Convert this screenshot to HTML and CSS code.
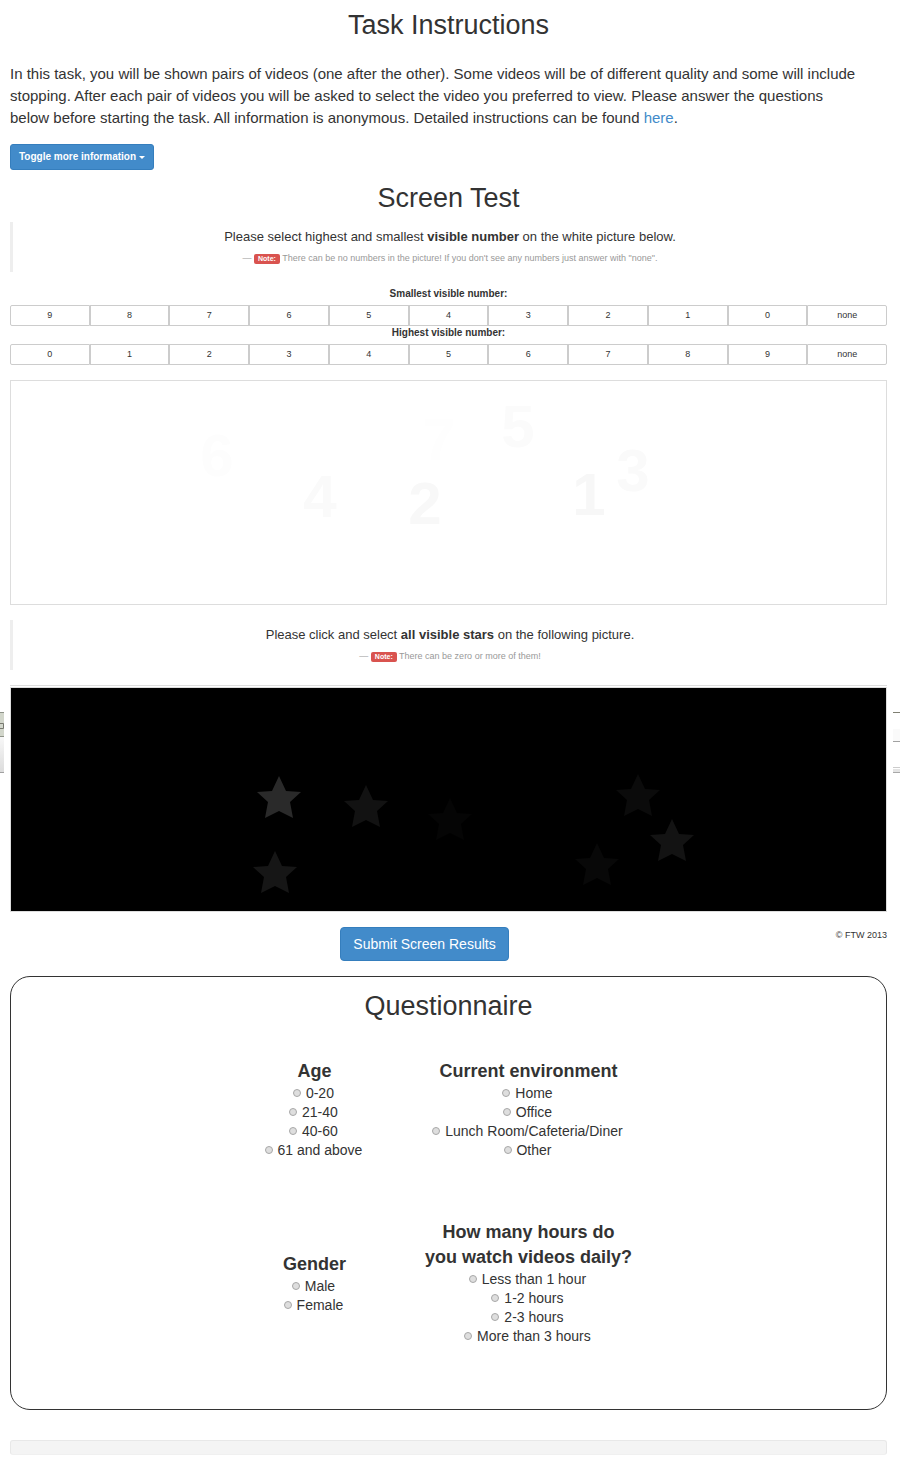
FILE: index.html
```html
<!DOCTYPE html>
<html lang="en">
<head>
<meta charset="utf-8">
<title>Task Instructions</title>
<link rel="stylesheet" href="styles.css">
</head>
<body>
<main class="page">
  <h1 class="title">Task Instructions</h1>
  <p class="lead">In this task, you will be shown pairs of videos (one after the other). Some videos will be of different quality and some will include<br>stopping. After each pair of videos you will be asked to select the video you preferred to view. Please answer the questions<br>below before starting the task. All information is anonymous. Detailed instructions can be found <a href="#">here</a>.</p>
  <button type="button" class="btn btn-small">Toggle more information <span class="caret"></span></button>

  <h2 class="title title-screen">Screen Test</h2>
  <blockquote class="quote">
    <p>Please select highest and smallest <strong>visible number</strong> on the white picture below.</p>
    <small>— <span class="tag">Note:</span> There can be no numbers in the picture! If you don't see any numbers just answer with "none".</small>
  </blockquote>

  <h3 class="group-label" id="smallest">Smallest visible number:</h3>
  <div class="btn-group" role="group" aria-labelledby="smallest">
    <button type="button">9</button><button type="button">8</button><button type="button">7</button><button type="button">6</button><button type="button">5</button><button type="button">4</button><button type="button">3</button><button type="button">2</button><button type="button">1</button><button type="button">0</button><button type="button">none</button>
  </div>
  <h3 class="group-label" id="highest">Highest visible number:</h3>
  <div class="btn-group" role="group" aria-labelledby="highest">
    <button type="button">0</button><button type="button">1</button><button type="button">2</button><button type="button">3</button><button type="button">4</button><button type="button">5</button><button type="button">6</button><button type="button">7</button><button type="button">8</button><button type="button">9</button><button type="button">none</button>
  </div>

  <div class="picture picture-white">
    <svg class="digits">
      <text x="206" y="95" fill="#fdfdfd">6</text>
      <text x="309" y="136" fill="#fafafa">4</text>
      <text x="414" y="143" fill="#f8f8f8">2</text>
      <text x="428" y="79" fill="#fefefe">7</text>
      <text x="507" y="66" fill="#fbfbfb">5</text>
      <text x="622" y="110" fill="#fafafa">3</text>
      <text x="578" y="134" fill="#f7f7f7">1</text>
    </svg>
  </div>

  <blockquote class="quote">
    <p>Please click and select <strong>all visible stars</strong> on the following picture.</p>
    <small>— <span class="tag">Note:</span> There can be zero or more of them!</small>
  </blockquote>

  <div class="stars-wrap">
    <div class="picture picture-black">
      <svg>
        <defs><polygon id="star" points="0,0 7,15 22,16 11,26 14,42 0,35 -14,42 -11,26 -22,16 -7,15"/></defs>
        <use href="#star" x="268" y="88" fill="#2a2a2a"/>
        <use href="#star" x="355" y="97" fill="#121212"/>
        <use href="#star" x="439" y="110" fill="#050505"/>
        <use href="#star" x="264" y="163" fill="#161616"/>
        <use href="#star" x="627" y="86" fill="#0b0b0b"/>
        <use href="#star" x="661" y="131" fill="#131313"/>
        <use href="#star" x="586" y="155" fill="#080808"/>
      </svg>
    </div>
    <svg class="edge edge-left" width="4" height="61" aria-hidden="true">
      <defs><linearGradient id="fade" x2="0" y2="1"><stop offset="0" stop-color="#f8f8f8"/><stop offset="1" stop-color="#dcdcdc"/></linearGradient></defs>
      <rect width="4" height="25" fill="#d2d6cb"/>
      <rect width="4" height="1" fill="#8f9389"/>
      <path d="M0 11.500H3.500V16.500H0" fill="none" stroke="#77786f"/>
      <rect y="24" width="4" height="1" fill="#8f9389"/>
      <rect y="25" width="4" height="35" fill="url(#fade)"/>
      <rect y="60" width="4" height="1" fill="#a0a0a0"/>
    </svg>
    <svg class="edge edge-right" width="7" height="61" aria-hidden="true">
      <rect width="7" height="1" fill="#7f7f72"/>
      <rect y="17" width="7" height="12" fill="#fafafa"/>
      <rect y="29" width="7" height="1" fill="#a2a2a2"/>
      <rect y="55" width="7" height="1" fill="#cccccc"/>
      <rect y="57" width="7" height="3" fill="#e4e4e4"/>
      <rect y="60" width="7" height="1" fill="#a8a8a8"/>
    </svg>
  </div>

  <div class="submit-row">
    <button type="button" class="btn btn-submit">Submit Screen Results</button>
    <span class="copy">© FTW 2013</span>
  </div>

  <form class="card">
    <h2 class="title">Questionnaire</h2>
    <div class="questions">
      <fieldset>
        <legend>Age</legend>
        <label><input type="radio" name="age"> 0-20</label>
        <label><input type="radio" name="age"> 21-40</label>
        <label><input type="radio" name="age"> 40-60</label>
        <label><input type="radio" name="age"> 61 and above</label>
      </fieldset>
      <fieldset>
        <legend>Current environment</legend>
        <label><input type="radio" name="env"> Home</label>
        <label><input type="radio" name="env"> Office</label>
        <label><input type="radio" name="env"> Lunch Room/Cafeteria/Diner</label>
        <label><input type="radio" name="env"> Other</label>
      </fieldset>
      <fieldset>
        <legend>Gender</legend>
        <label><input type="radio" name="gender"> Male</label>
        <label><input type="radio" name="gender"> Female</label>
      </fieldset>
      <fieldset>
        <legend>How many hours do<br>you watch videos daily?</legend>
        <label><input type="radio" name="hours"> Less than 1 hour</label>
        <label><input type="radio" name="hours"> 1-2 hours</label>
        <label><input type="radio" name="hours"> 2-3 hours</label>
        <label><input type="radio" name="hours"> More than 3 hours</label>
      </fieldset>
    </div>
  </form>

  <div class="well"></div>
</main>
</body>
</html>
```
FILE: styles.css
```css
* { box-sizing: border-box; }

body {
  margin: 0;
  background: #fff;
  color: #333;
  font: 14px/20px "Liberation Sans", Arial, sans-serif;
}

.page { padding: 10px 17px 29px 10px; }

.title {
  margin: 0;
  font-size: 27px;
  font-weight: 400;
  line-height: 30px;
  text-align: center;
}

.lead { margin: 23px 0 15px; font-size: 15px; line-height: 22px; }
.lead a { color: #428bca; text-decoration: none; }

.btn {
  border: 1px solid #357ebd;
  border-radius: 4px;
  background: #428bca;
  color: #fff;
  font-family: inherit;
}

.btn-small {
  display: block;
  padding: 0 8px;
  border-radius: 3px;
  font-size: 10px;
  font-weight: 700;
  line-height: 24px;
}

.caret {
  display: inline-block;
  border: 3px solid transparent;
  border-top-color: #fff;
  border-bottom: 0;
  vertical-align: middle;
}

.title-screen { margin: 13px 0 9px; }

.quote {
  margin: 0;
  padding: 4px 0;
  border-left: 3px solid #eee;
  text-align: center;
}
.quote p { margin: 0; font-size: 13px; line-height: 22px; }
.quote small {
  display: block;
  color: #999;
  font-size: 9px;
  line-height: 20px;
}

.tag {
  display: inline-block;
  padding: 0 4px;
  border-radius: 2px;
  background: #d9534f;
  color: #fff;
  font-size: 7px;
  font-weight: 700;
  line-height: 10px;
}

.group-label {
  margin: 0;
  padding-bottom: 4px;
  font-size: 10px;
  line-height: 14px;
  text-align: center;
}
.quote + .group-label { margin-top: 15px; }

.btn-group { display: flex; }
.btn-group button {
  flex: 1;
  padding: 0;
  border: 1px solid #ccc;
  background: #fff;
  color: #333;
  font-family: inherit;
  font-size: 9px;
  line-height: 19px;
}
.btn-group button:first-child { border-radius: 2px 0 0 2px; }
.btn-group button:last-child { border-radius: 0 2px 2px 0; }

.picture { border: 1px solid #ddd; }
.picture svg { display: block; width: 100%; height: 223px; }
.picture-white { margin: 15px 0; }
.picture-black { background: #000; }

.digits {
  font-size: 60px;
  font-weight: 700;
  text-anchor: middle;
}

.stars-wrap {
  position: relative;
  margin-top: 15px;
  padding-top: 1px;
  border-top: 1px solid #ddd;
}

.edge { position: absolute; top: 26px; }
.edge-left { left: -10px; }
.edge-right { right: -13px; }

.submit-row {
  display: grid;
  grid-template-columns: 1fr auto 1fr;
  margin: 15px 0;
}
.btn-submit {
  grid-column: 2;
  margin-right: 48px;
  padding: 0 12px;
  font-size: 14px;
  line-height: 32px;
}
.copy { font-size: 9px; line-height: 16px; text-align: right; }

.card {
  padding: 14px 0 63px;
  border: 1px solid #333;
  border-radius: 20px;
}

.questions {
  display: grid;
  grid-template-columns: 100px 208px;
  justify-content: center;
  align-items: center;
  gap: 60px;
  margin-top: 38px;
}

fieldset {
  min-width: 0;
  margin: 0;
  padding: 0;
  border: 0;
  text-align: center;
  white-space: nowrap;
}
legend {
  width: 100%;
  padding: 0;
  font-size: 18px;
  font-weight: 700;
  line-height: 25px;
}
label { display: block; padding-right: 2px; font-size: 14px; line-height: 19px; }

input[type="radio"] {
  appearance: none;
  width: 8px;
  height: 8px;
  margin: 0 1px 0 0;
  border: 1px solid #a8a8a8;
  border-radius: 50%;
  background: #dedede;
  vertical-align: 1px;
}

.well {
  height: 15px;
  margin-top: 30px;
  border: 1px solid #e8e8e8;
  border-bottom-color: #f0f0f0;
  border-radius: 3px;
  background: #f4f4f4;
}
```
